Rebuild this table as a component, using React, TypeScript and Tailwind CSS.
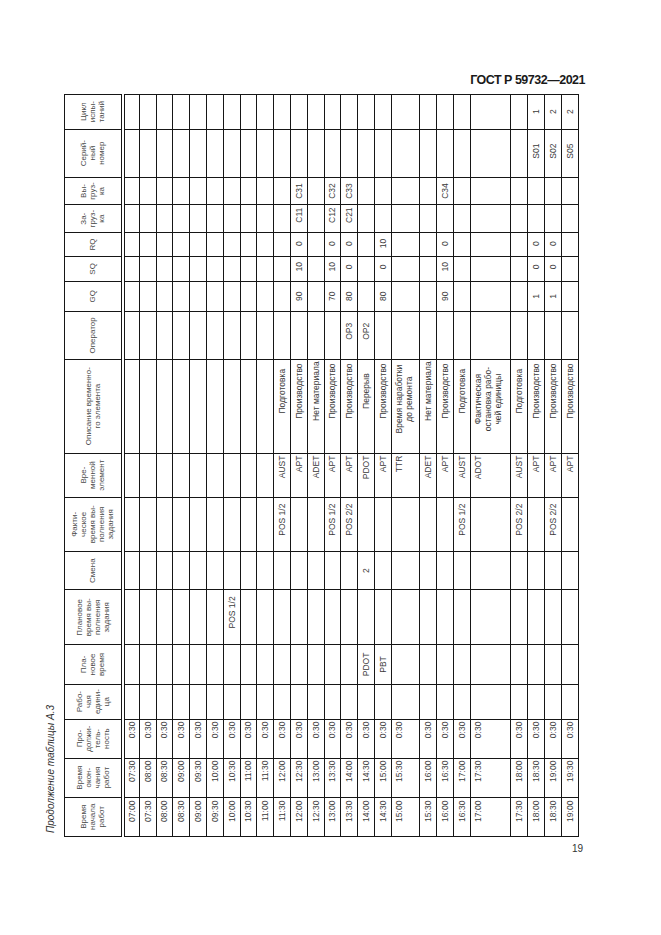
import React from "react";

// column order follows the unrotated table, left to right
const headers: string[][] = [
  ["Время", "начала", "работ"],
  ["Время", "окон-", "чания", "работ"],
  ["Про-", "должи-", "тель-", "ность"],
  ["Рабо-", "чая", "едини-", "ца"],
  ["Пла-", "новое", "время"],
  ["Плановое", "время вы-", "полнения", "задания"],
  ["Смена"],
  ["Факти-", "ческое", "время вы-", "полнения", "задания"],
  ["Вре-", "менной", "элемент"],
  ["Описание временно-", "го элемента"],
  ["Оператор"],
  ["GQ"],
  ["SQ"],
  ["RQ"],
  ["За-", "груз-", "ка"],
  ["Вы-", "груз-", "ка"],
  ["Серий-", "ный", "номер"],
  ["Цикл", "испы-", "таний"],
];

const colWidths = [
  "w-[39.4px]",
  "w-[39px]",
  "w-[39px]",
  "w-[35px]",
  "w-[39.3px]",
  "w-[55px]",
  "w-[38.3px]",
  "w-[54.4px]",
  "w-[44px]",
  "w-[94px]",
  "w-[47.6px]",
  "w-[30.4px]",
  "w-[24.6px]",
  "w-[24px]",
  "w-[27.7px]",
  "w-[27.7px]",
  "w-[48px]",
  "w-[35px]",
];

// data alignment per column, as it sits in the scan
const cellAlign = [
  "text-right pr-[3px]",
  "text-right pr-[2px]",
  "text-right pr-[2px]",
  "text-center",
  "text-center",
  "text-right pr-[6px]",
  "text-center",
  "text-right pr-[6px]",
  "text-right pr-[2px]",
  "text-center pl-[30px]",
  "text-center pl-[8px]",
  "text-center",
  "text-center pl-[4px]",
  "text-center pl-[2px]",
  "text-center pl-[7px]",
  "text-center",
  "text-center pl-[4px]",
  "text-center",
];

type Row = { h: string; tall?: boolean; cells: string[][] };

const r = (cells: (string | string[])[], h = "h-[16.8px]", tall = false): Row => {
  const full: string[][] = [];
  for (let i = 0; i < 18; i++) {
    const c = cells[i] ?? "";
    full.push(Array.isArray(c) ? c : c ? [c] : []);
  }
  return { h, tall, cells: full };
};

const rows: Row[] = [
  r(["07:00", "07:30", "0:30"]),
  r(["07:30", "08:00", "0:30"]),
  r(["08:00", "08:30", "0:30"]),
  r(["08:30", "09:00", "0:30"]),
  r(["09:00", "09:30", "0:30"]),
  r(["09:30", "10:00", "0:30"]),
  r(["10:00", "10:30", "0:30", "", "", "POS 1/2"]),
  r(["10:30", "11:00", "0:30"]),
  r(["11:00", "11:30", "0:30"]),
  r(["11:30", "12:00", "0:30", "", "", "", "", "POS 1/2", "AUST", "Подготовка"]),
  r(["12:00", "12:30", "0:30", "", "", "", "", "", "APT", "Производство", "", "90", "10", "0", "C11", "C31"]),
  r(["12:30", "13:00", "0:30", "", "", "", "", "", "ADET", "Нет материала"]),
  r(["13:00", "13:30", "0:30", "", "", "", "", "POS 1/2", "APT", "Производство", "", "70", "10", "0", "C12", "C32"]),
  r(["13:30", "14:00", "0:30", "", "", "", "", "POS 2/2", "APT", "Производство", "OP3", "80", "0", "0", "C21", "C33"]),
  r(["14:00", "14:30", "0:30", "", "PDOT", "", "2", "", "PDOT", "Перерыв", "OP2"]),
  r(["14:30", "15:00", "0:30", "", "PBT", "", "", "", "APT", "Производство", "", "80", "0", "10"]),
  r(["15:00", "15:30", "0:30", "", "", "", "", "", "TTR", ["Время наработки", "до ремонта"]], "h-[28.6px]", true),
  r(["15:30", "16:00", "0:30", "", "", "", "", "", "ADET", "Нет материала"]),
  r(["16:00", "16:30", "0:30", "", "", "", "", "", "APT", "Производство", "", "90", "10", "0", "", "C34"]),
  r(["16:30", "17:00", "0:30", "", "", "", "", "POS 1/2", "AUST", "Подготовка"]),
  r(
    ["17:00", "17:30", "0:30", "", "", "", "", "", "ADOT", ["Фактическая", "остановка рабо-", "чей единицы"]],
    "h-[40.7px]",
    true
  ),
  r(["17:30", "18:00", "0:30", "", "", "", "", "POS 2/2", "AUST", "Подготовка"]),
  r(["18:00", "18:30", "0:30", "", "", "", "", "", "APT", "Производство", "", "1", "0", "0", "", "", "S01", "1"]),
  r(["18:30", "19:00", "0:30", "", "", "", "", "POS 2/2", "APT", "Производство", "", "1", "0", "0", "", "", "S02", "2"]),
  r(["19:00", "19:30", "0:30", "", "", "", "", "", "APT", "Производство", "", "", "", "", "", "", "S05", "2"]),
];

function Table() {
  return (
    <table className="table-fixed border-collapse w-[743px] text-[#3a3a3a] text-[8.5px]">
      <colgroup>
        {colWidths.map((w, i) => (
          <col key={i} className={w} />
        ))}
      </colgroup>
      <thead>
        <tr className="h-[58px]">
          {headers.map((lines, i) => (
            <th
              key={i}
              className="border border-double border-[#161616] border-b-[4px] p-0 align-middle text-center font-normal leading-[9px] text-[8px] text-[#4a4a4a]"
            >
              {lines.map((l, j) => (
                <div key={j} className="whitespace-nowrap">
                  {l}
                </div>
              ))}
            </th>
          ))}
        </tr>
      </thead>
      <tbody>
        {rows.map((row, i) => (
          <tr key={i} className={row.h}>
            {row.cells.map((c, j) => (
              <td
                key={j}
                className={`border border-[#161616] p-0 leading-[10px] whitespace-nowrap ${
                  row.tall ? "align-top pt-[2px]" : "align-middle"
                } ${c.length > 1 ? "text-center pl-[14px]" : cellAlign[j]}`}
              >
                {c.map((l, k) => (
                  <div key={k}>{l}</div>
                ))}
              </td>
            ))}
          </tr>
        ))}
      </tbody>
    </table>
  );
}

export default function App() {
  return (
    <div className="w-[661px] h-[935px] bg-white overflow-hidden flex flex-col font-['Liberation_Sans',Arial,sans-serif] text-[#222]">
      <div className="h-[93px] pt-[67px] pr-[76px] text-right">
        <span className="font-bold text-[12.5px] leading-[15px] tracking-[-0.5px] text-[#1a1a1a]">
          ГОСТ Р 59732—2021
        </span>
      </div>

      <div className="ml-[44px] w-[535px] h-[744px] shrink-0">
        <div className="w-[744px] origin-top-left -rotate-90 translate-y-[744px]">
          <div className="h-[14px] mb-[6px] pl-[4px] italic text-[10px] leading-[14px] text-[#333]">
            Продолжение таблицы А.3
          </div>
          <Table />
        </div>
      </div>

      <div className="pt-[6px] pr-[78px] text-right text-[10px] leading-[12px] text-[#333]">19</div>
    </div>
  );
}
